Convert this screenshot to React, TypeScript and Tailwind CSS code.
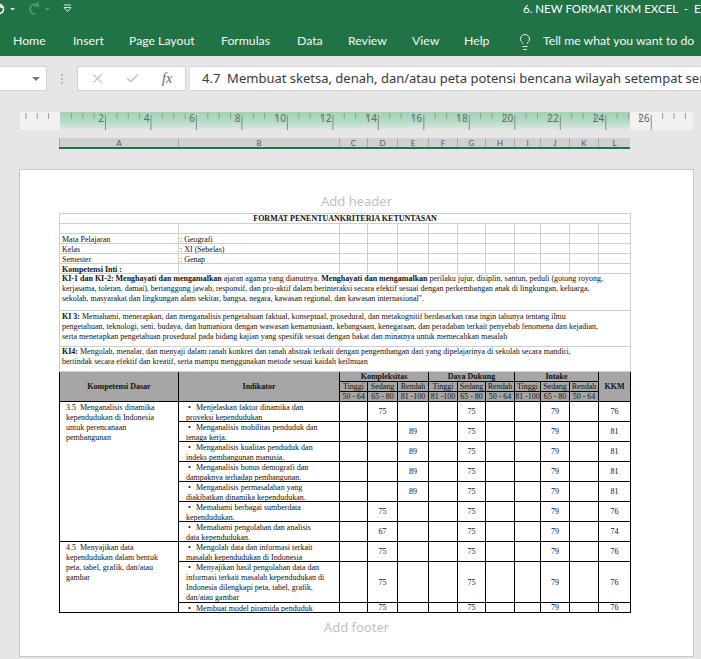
import { Check, Lightbulb, X } from 'lucide-react';

const colWidths = [119, 161, 28, 30, 31, 29, 28, 29, 26, 29, 29, 32];
const colLetters = ['A', 'B', 'C', 'D', 'E', 'F', 'G', 'H', 'I', 'J', 'K', 'L'];

const tabs = [
  { label: 'Home', className: 'w-[60px]' },
  { label: 'Insert', className: 'w-[56px]' },
  { label: 'Page Layout', className: 'w-[92px]' },
  { label: 'Formulas', className: 'w-[76px]' },
  { label: 'Data', className: 'w-[51px]' },
  { label: 'Review', className: 'w-[64px]' },
  { label: 'View', className: 'w-[52px]' },
  { label: 'Help', className: 'w-[52px]' },
];

const scores = [
  {
    lines: ['Menjelaskan faktor dinamika dan', 'proyeksi kependudukan'],
    sedang: '75',
    rendah: '',
    kkm: '76',
  },
  {
    lines: ['Menganalisis mobilitas penduduk dan', 'tenaga kerja.'],
    sedang: '',
    rendah: '89',
    kkm: '81',
  },
  {
    lines: ['Menganalisis kualitas penduduk dan', 'indeks pembangunan manusia.'],
    sedang: '',
    rendah: '89',
    kkm: '81',
  },
  {
    lines: ['Menganalisis bonus demografi dan', 'dampaknya terhadap pembangunan.'],
    sedang: '',
    rendah: '89',
    kkm: '81',
  },
  {
    lines: ['Menganalisis permasalahan yang', 'diakibatkan dinamika kependudukan.'],
    sedang: '',
    rendah: '89',
    kkm: '81',
  },
  {
    lines: ['Memahami berbagai sumberdata', 'kependudukan.'],
    sedang: '75',
    rendah: '',
    kkm: '76',
  },
  {
    lines: ['Memahami pengolahan dan analisis', 'data kependudukan.'],
    sedang: '67',
    rendah: '',
    kkm: '74',
  },
];

const skills = [
  {
    lines: ['Mengolah data dan informasi terkait', 'masalah kependudukan di Indonesia'],
    height: 'h-[19px]',
  },
  {
    lines: [
      'Menyajikan hasil pengolahan data dan',
      'informasi terkait masalah kependudukan di',
      'Indonesia dilengkapi peta, tabel, grafik,',
      'dan/atau gambar',
    ],
    height: 'h-[40px]',
  },
  {
    lines: ['Membuat model piramida penduduk'],
    height: 'h-[9px]',
  },
];

const Ruler = () => {
  const ticks = Array.from({ length: 60 }, (_, i) => i);
  return (
    <svg width="701" height="22" className="block">
      <defs>
        <linearGradient id="ruler-fill" x1="0" y1="0" x2="0" y2="1">
          <stop offset="0" stopColor="#a3d3b7" />
          <stop offset="0.55" stopColor="#b5dcc6" />
          <stop offset="1" stopColor="#e4e8e5" />
        </linearGradient>
      </defs>
      <rect x="20" y="0" width="673" height="18" fill="#f1f1f1" />
      <rect x="60" y="0" width="570" height="18" fill="url(#ruler-fill)" />
      {ticks.map((i) => {
        const x = 60 + i * 11.37 - 34.1;
        if (x < 24 || x > 690 || i === 3) return null;
        const major = (i - 3) % 4 === 0 && i >= 7;
        return major ? (
          <line key={i} x1={x} x2={x} y1="3" y2="18" stroke="#8a8a8a" strokeWidth="1" />
        ) : (
          <line key={i} x1={x} x2={x} y1="1" y2="7" stroke="#9a9a9a" strokeWidth="1" />
        );
      })}
      {Array.from({ length: 13 }, (_, i) => (
        <text
          key={i}
          x={60 + (i + 1) * 45.48 - 1.5}
          y="10"
          textAnchor="end"
          fontSize="10"
          fontFamily="'Noto Sans', sans-serif"
          fill="#666"
        >
          {(i + 1) * 2}
        </text>
      ))}
    </svg>
  );
};

const Bullet = ({ lines, height }: { lines: string[]; height: string }) => (
  <div className={`overflow-hidden pt-[1px] ${height}`}>
    {lines.map((line, i) => (
      <div key={line} className={i === 0 ? 'flex whitespace-nowrap' : 'whitespace-nowrap'}>
        {i === 0 && <span className="w-[10px] pl-[2px]">•</span>}
        {line}
      </div>
    ))}
  </div>
);

const bodyCell = 'border border-black p-0 text-center align-middle text-[8px] leading-[9px]';
const headCell = 'border border-black p-0 text-center align-middle text-[8px] leading-[9px] bg-[#a6a6a6] whitespace-nowrap';
const gridCell = 'border border-[#cfcfcf] p-0 leading-[9px]';
const kiCell = 'border border-[#cfcfcf] p-0 pl-[2px] align-top whitespace-nowrap';

export default function App() {
  return (
    <div className="h-[659px] w-[701px] overflow-hidden bg-[#e6e6e6] font-['Lato',sans-serif]">
      {/* Title bar */}
      <div className="relative flex h-[26px] items-start bg-[#217346] text-white">
        <svg width="80" height="18" viewBox="0 0 80 18" fill="none" className="shrink-0">
          <path d="M-3 5 a4.5 4.5 0 1 1 0 8 M3 7 H-1" stroke="#fff" strokeWidth="1.6" />
          <path d="M10 8 h5 l-2.5 2.5 z" fill="#d7e6dd" />
          <path d="M38 5 a5 5 0 1 0 -3 9 M38 2 v4 h-4" stroke="#4f9a72" strokeWidth="1.6" />
          <path d="M45 8 h5 l-2.5 2.5 z" fill="#4f9a72" />
          <path d="M64 5 h7 M64 7.5 h7 l-3.5 4 z" stroke="#d7e6dd" strokeWidth="1" />
        </svg>
        <span className="ml-[443px] mt-[1px] whitespace-pre text-[11.5px] leading-[16px]">6. NEW FORMAT KKM EXCEL  -  Excel</span>
      </div>

      {/* Ribbon tabs */}
      <div className="flex h-[30px] items-center whitespace-nowrap bg-[#217346] pl-[13px] pt-[1px] text-[12.25px] text-[#f2f7f4]">
        {tabs.map((tab) => (
          <span key={tab.label} className={tab.className}>
            {tab.label}
          </span>
        ))}
        <Lightbulb className="h-[18px] w-[18px] shrink-0" strokeWidth={1.2} />
        <span className="ml-[9px]">Tell me what you want to do</span>
      </div>

      {/* Formula bar */}
      <div className="mt-[10px] flex h-[25px] items-stretch">
        <div className="flex w-[47px] items-center justify-end border border-l-0 border-[#d4d4d4] bg-white pr-[6px]">
          <span className="h-0 w-0 border-x-[4px] border-t-[4px] border-x-transparent border-t-[#777]" />
        </div>
        <div className="flex w-[30px] flex-col items-center justify-center gap-[2px]">
          <span className="h-[2px] w-[2px] bg-[#b5b5b5]" />
          <span className="h-[2px] w-[2px] bg-[#b5b5b5]" />
          <span className="h-[2px] w-[2px] bg-[#b5b5b5]" />
        </div>
        <div className="flex w-[109px] items-center border border-[#d4d4d4] bg-white">
          <X className="ml-[12px] h-[15px] w-[15px] text-[#c6c6c6]" strokeWidth={2} />
          <Check className="ml-[20px] h-[15px] w-[15px] text-[#c6c6c6]" strokeWidth={2.5} />
          <span className="ml-[22px] font-['Liberation_Serif',serif] text-[14px] text-[#666] italic">fx</span>
        </div>
        <div className="ml-[4px] flex flex-1 items-center overflow-hidden whitespace-pre border-y border-[#d4d4d4] bg-white pl-[12px] pt-[1px] font-['Noto_Sans',sans-serif] text-[13px] text-[#3a3a3a]">
          4.7  Membuat sketsa, denah, dan/atau peta potensi bencana wilayah setempat serta
        </div>
      </div>

      {/* Ruler */}
      <div className="mt-[21px] h-[22px]">
        <Ruler />
      </div>

      {/* Column letters */}
      <div className="ml-[59px] mt-[4px] flex h-[11px] w-[571px] border-b-2 border-[#217346] bg-[#d0d0d0] text-[8px] leading-[10px] text-[#555]">
        {colLetters.map((letter, i) => (
          <div
            key={letter}
            style={{ width: colWidths[i] }}
            className="border-l border-[#a8a8a8] text-center"
          >
            {letter}
          </div>
        ))}
      </div>

      {/* Page */}
      <div className="ml-[19px] mt-[20px] h-[488px] w-[675px] border border-[#c8c8c8] bg-white">
        <div className="flex h-[43px] items-end justify-center pb-[3px] font-['Noto_Sans',sans-serif] text-[13px] leading-[18px] text-[#c0c0c0]">
          Add header
        </div>
        <table className="ml-[39px] w-[571px] table-fixed border-collapse font-['Liberation_Serif',serif] text-[8px] leading-[10px] text-[#111]">
          <colgroup>
            {colWidths.map((w, i) => (
              <col key={i} style={{ width: w }} />
            ))}
          </colgroup>
          <tbody>
            <tr className="h-[10px]">
              <td colSpan={12} className={`${gridCell} text-center font-bold whitespace-nowrap`}>
                FORMAT PENENTUANKRITERIA KETUNTASAN
              </td>
            </tr>
            {[
              ['', ''],
              ['Mata Pelajaran', ': Geografi'],
              ['Kelas', ': XI (Sebelas)'],
              ['Semester', ': Genap'],
            ].map(([label, value], i) => (
              <tr key={i} className="h-[10px]">
                <td className={`${gridCell} pl-[2px] whitespace-nowrap`}>
                  <div className="h-[9px] translate-y-[1px]">{label}</div>
                </td>
                <td className={`${gridCell} pl-[1px] whitespace-nowrap`}>
                  <div className="h-[9px] translate-y-[1px]">{value}</div>
                </td>
                {colWidths.slice(2).map((_, c) => (
                  <td key={c} className={gridCell} />
                ))}
              </tr>
            ))}
            <tr className="h-[10px]">
              <td className={`${gridCell} pl-[2px] font-bold whitespace-nowrap`}>
                <div className="h-[9px] translate-y-[1px]">Kompetensi Inti :</div>
              </td>
              <td className={gridCell} />
              {colWidths.slice(2).map((_, c) => (
                <td key={c} className={gridCell} />
              ))}
            </tr>
            <tr className="h-[37px]">
              <td colSpan={12} className={kiCell}>
                <div>
                  <b>KI-1 dan KI-2: Menghayati dan mengamalkan</b> ajaran agama yang dianutnya.{' '}
                  <b>Menghayati dan mengamalkan</b> perilaku jujur, disiplin, santun, peduli (gotong royong,
                </div>
                <div>
                  kerjasama, toleran, damai), bertanggung jawab, responsif, dan pro-aktif dalam berinteraksi secara efektif
                  sesuai dengan perkembangan anak di lingkungan, keluarga,
                </div>
                <div>sekolah, masyarakat dan lingkungan alam sekitar, bangsa, negara, kawasan regional, dan kawasan internasional".</div>
              </td>
            </tr>
            <tr className="h-[36px]">
              <td colSpan={12} className={`${kiCell} pt-[1px]`}>
                <div>
                  <b>KI 3:</b> Memahami, menerapkan, dan menganalisis pengetahuan faktual, konseptual, prosedural, dan
                  metakognitif berdasarkan rasa ingin tahunya tentang ilmu
                </div>
                <div>
                  pengetahuan, teknologi, seni, budaya, dan humaniora dengan wawasan kemanusiaan, kebangsaan, kenegaraan, dan
                  peradaban terkait penyebab fenomena dan kejadian,
                </div>
                <div>serta menerapkan pengetahuan prosedural pada bidang kajian yang spesifik sesuai dengan bakat dan minatnya untuk memecahkan masalah</div>
              </td>
            </tr>
            <tr className="h-[25px]">
              <td colSpan={12} className={kiCell}>
                <div>
                  <b>KI4:</b> Mengolah, menalar, dan menyaji dalam ranah konkret dan ranah abstrak terkait dengan pengembangan
                  dari yang dipelajarinya di sekolah secara mandiri,
                </div>
                <div>bertindak secara efektif dan kreatif, serta mampu menggunakan metode sesuai kaidah keilmuan</div>
              </td>
            </tr>

            {/* Score header */}
            <tr className="h-[10px]">
              <th rowSpan={3} className={`${headCell} font-bold`}>Kompetensi Dasar</th>
              <th rowSpan={3} className={`${headCell} font-bold`}>Indikator</th>
              <th colSpan={3} className={`${headCell} font-bold`}>Kompleksitas</th>
              <th colSpan={3} className={`${headCell} font-bold`}>Daya Dukung</th>
              <th colSpan={3} className={`${headCell} font-bold`}>Intake</th>
              <th rowSpan={3} className={`${headCell} font-bold`}>KKM</th>
            </tr>
            <tr className="h-[10px]">
              {['Tinggi', 'Sedang', 'Rendah', 'Tinggi', 'Sedang', 'Rendah', 'Tinggi', 'Sedang', 'Rendah'].map((label, i) => (
                <th key={i} className={`${headCell} font-normal`}>{label}</th>
              ))}
            </tr>
            <tr className="h-[9px]">
              {['50 - 64', '65 - 80', '81 -100', '81 -100', '65 - 80', '50 - 64', '81 -100', '65 - 80', '50 - 64'].map((label, i) => (
                <th key={i} className={`${headCell} font-normal`}>{label}</th>
              ))}
            </tr>

            {/* Knowledge indicators */}
            {scores.map((row, i) => (
              <tr key={row.lines[0]} className="h-[20px]">
                {i === 0 && (
                  <td rowSpan={scores.length} className="border border-black py-[1px] pl-[6px] align-top whitespace-pre">
                    <div>3.5  Menganalisis dinamika</div>
                    <div>kependudukan di Indonesia</div>
                    <div>untuk perencanaan</div>
                    <div>pembangunan</div>
                  </td>
                )}
                <td className="border border-black p-0 pl-[7px] align-top">
                  <Bullet lines={row.lines} height="h-[19px]" />
                </td>
                <td className={bodyCell} />
                <td className={bodyCell}>{row.sedang}</td>
                <td className={bodyCell}>{row.rendah}</td>
                <td className={bodyCell} />
                <td className={bodyCell}>75</td>
                <td className={bodyCell} />
                <td className={bodyCell} />
                <td className={bodyCell}>79</td>
                <td className={bodyCell} />
                <td className={bodyCell}>{row.kkm}</td>
              </tr>
            ))}

            {/* Skill indicators */}
            {skills.map((row, i) => (
              <tr key={row.lines[0]}>
                {i === 0 && (
                  <td rowSpan={skills.length} className="border border-black py-[1px] pl-[6px] align-top whitespace-pre">
                    <div>4.5  Menyajikan data</div>
                    <div>kependudukan dalam bentuk</div>
                    <div>peta, tabel, grafik, dan/atau</div>
                    <div>gambar</div>
                  </td>
                )}
                <td className="border border-black p-0 pl-[7px] align-top">
                  <Bullet lines={row.lines} height={row.height} />
                </td>
                <td className={bodyCell} />
                <td className={bodyCell}>75</td>
                <td className={bodyCell} />
                <td className={bodyCell} />
                <td className={bodyCell}>75</td>
                <td className={bodyCell} />
                <td className={bodyCell} />
                <td className={bodyCell}>79</td>
                <td className={bodyCell} />
                <td className={bodyCell}>76</td>
              </tr>
            ))}
          </tbody>
        </table>
        <div className="mt-[5px] text-center font-['Noto_Sans',sans-serif] text-[13px] leading-[18px] text-[#c0c0c0]">Add footer</div>
      </div>
    </div>
  );
}
